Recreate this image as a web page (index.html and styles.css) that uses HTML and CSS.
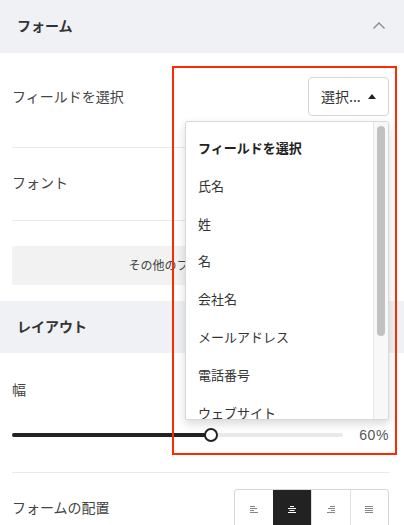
FILE: index.html
```html
<!DOCTYPE html>
<html lang="ja">
<head>
<meta charset="utf-8">
<link rel="stylesheet" href="styles.css">
</head>
<body>
<div class="panel">
  <div class="sec-head">
    <span>フォーム</span>
    <svg class="chev" width="14" height="10" viewBox="0 0 14 10"><polyline points="1.5,7.5 7,2 12.5,7.5" fill="none" stroke="#8a8a8a" stroke-width="1.3"/></svg>
  </div>
  <div class="sec-body">
    <div class="row row-field">
      <span class="label">フィールドを選択</span>
      <div class="select"><span>選択...</span><span class="tri"></span></div>
    </div>
    <div class="row row-font">
      <span class="label">フォント</span>
    </div>
    <div class="more">その他のフィールドを追加</div>
  </div>
  <div class="sec-head layout">
    <span>レイアウト</span>
  </div>
  <div class="sec-body">
    <div class="width-block">
      <div class="label">幅</div>
      <div class="slider-row">
        <div class="track"><div class="fill" style="width:60%"></div><div class="thumb" style="left:60%"></div></div>
        <span class="value">60%</span>
      </div>
    </div>
    <div class="row align-row">
      <span class="label">フォームの配置</span>
      <div class="btn-group">
        <div class="abtn">
          <svg width="10" height="9" viewBox="0 0 10 9"><g stroke="currentColor" stroke-width="1"><line x1="1" y1="1.5" x2="6" y2="1.5"/><line x1="1" y1="3.5" x2="8" y2="3.5"/><line x1="1" y1="5.5" x2="5" y2="5.5"/><line x1="1" y1="7.5" x2="9" y2="7.5"/></g></svg>
        </div>
        <div class="abtn active">
          <svg width="10" height="9" viewBox="0 0 10 9"><g stroke="currentColor" stroke-width="1"><line x1="3" y1="1.5" x2="7" y2="1.5"/><line x1="1" y1="3.5" x2="9" y2="3.5"/><line x1="2.5" y1="5.5" x2="7.5" y2="5.5"/><line x1="1" y1="7.5" x2="9" y2="7.5"/></g></svg>
        </div>
        <div class="abtn">
          <svg width="10" height="9" viewBox="0 0 10 9"><g stroke="currentColor" stroke-width="1"><line x1="4" y1="1.5" x2="9" y2="1.5"/><line x1="2" y1="3.5" x2="9" y2="3.5"/><line x1="5" y1="5.5" x2="9" y2="5.5"/><line x1="1" y1="7.5" x2="9" y2="7.5"/></g></svg>
        </div>
        <div class="abtn">
          <svg width="10" height="9" viewBox="0 0 10 9"><g stroke="currentColor" stroke-width="1"><line x1="1" y1="1.5" x2="9" y2="1.5"/><line x1="1" y1="3.5" x2="9" y2="3.5"/><line x1="1" y1="5.5" x2="9" y2="5.5"/><line x1="1" y1="7.5" x2="9" y2="7.5"/></g></svg>
        </div>
      </div>
    </div>
  </div>

  <div class="dropdown">
    <ul class="options">
      <li class="opt head">フィールドを選択</li>
      <li class="opt">氏名</li>
      <li class="opt">姓</li>
      <li class="opt">名</li>
      <li class="opt">会社名</li>
      <li class="opt">メールアドレス</li>
      <li class="opt">電話番号</li>
      <li class="opt">ウェブサイト</li>
    </ul>
    <div class="sbar"><div class="sthumb"></div></div>
  </div>
  <div class="annot"></div>
</div>
</body>
</html>
```

FILE: styles.css
```css
* { box-sizing: border-box; }
html, body { margin: 0; padding: 0; background: #fff; }
body {
  font-family: "Noto Sans CJK JP", "Noto Sans", sans-serif;
  color: #444;
  font-size: 14px;
  width: 404px;
  height: 525px;
  overflow: hidden;
}
.panel { position: relative; width: 404px; height: 525px; overflow: hidden; }

.sec-head {
  height: 53px;
  background: #f0f1f4;
  display: flex;
  align-items: center;
  justify-content: space-between;
  padding: 0 18px 3px 17px;
  font-weight: bold;
  font-size: 14px;
  color: #333;
}
.sec-head.layout { height: 52px; }
.chev { display: block; margin-top: 2px; }

.sec-body { padding: 0 15px 0 12px; }

.row {
  display: flex;
  align-items: center;
  justify-content: space-between;
  border-bottom: 1px solid #e9e9e9;
}
.label { font-size: 14px; color: #444; line-height: 20px; }
.row-field { height: 95px; padding-bottom: 7px; }
.row-field .label { margin-bottom: 2px; }
.row-font { height: 73px; padding-bottom: 4px; }

.select {
  width: 81px;
  height: 39px;
  border: 1px solid #d6d6d6;
  border-radius: 4px;
  display: flex;
  align-items: center;
  justify-content: space-between;
  padding: 0 12px 2px 12px;
  font-size: 14px;
  color: #333;
}
.tri {
  width: 0; height: 0;
  border-left: 4px solid transparent;
  border-right: 4px solid transparent;
  border-bottom: 5px solid #222;
  margin-top: 1px;
}

.more {
  margin-top: 25px;
  height: 39px;
  background: #f2f2f2;
  border-radius: 2px;
  display: flex;
  align-items: center;
  justify-content: center;
  font-size: 12px;
  color: #444;
  margin-bottom: 16px;
  padding-bottom: 2px;
}

.width-block {
  padding-top: 26px;
  padding-bottom: 27px;
  border-bottom: 1px solid #e9e9e9;
}
.slider-row {
  margin-top: 26px;
  height: 20px;
  display: flex;
  align-items: center;
}
.track {
  position: relative;
  width: 331px;
  height: 4px;
  background: #e9e9e9;
  border-radius: 2px;
}
.fill {
  height: 4px;
  background: #222;
  border-radius: 2px;
}
.thumb {
  position: absolute;
  top: 50%;
  width: 14px;
  height: 14px;
  margin: -7px 0 0 -7px;
  border: 2px solid #222;
  border-radius: 50%;
  background: #fff;
}
.value {
  margin-left: auto;
  font-family: "Liberation Sans", Arial, sans-serif;
  font-size: 14px;
  letter-spacing: 0.6px;
  color: #555;
}

.align-row { border-bottom: none; height: 53px; align-items: flex-start; }
.align-row .label { margin-top: 24px; }
.btn-group {
  margin-top: 16px;
  display: flex;
  flex: none;
  width: 155px;
  height: 40px;
  border: 1px solid #d6d6d6;
  border-radius: 3px;
  overflow: hidden;
}
.abtn {
  flex: 1;
  display: flex;
  align-items: center;
  justify-content: center;
  color: #888;
  border-left: 1px solid #e0e0e0;
}
.abtn:first-child { border-left: none; }
.abtn.active { background: #222; color: #fff; border-left-color: #222; }
.abtn svg { display: block; }

.dropdown {
  position: absolute;
  left: 185px;
  top: 121px;
  width: 204px;
  height: 299px;
  background: #fff;
  border: 1px solid #d9d9d9;
  border-radius: 2px;
  box-shadow: 0 4px 10px rgba(0,0,0,0.15);
  overflow: hidden;
  display: flex;
}
.options {
  list-style: none;
  margin: 0;
  padding: 7px 0 0 12px;
  flex: 1;
}
.opt {
  height: 37.8px;
  line-height: 37.8px;
  font-size: 13px;
  color: #333;
  white-space: nowrap;
}
.opt.head { font-weight: bold; color: #222; }
.sbar {
  width: 15px;
  background: #f8f8f8;
  border-left: 1px solid #e6e6e6;
  padding: 4px 0 0 3px;
}
.sthumb {
  width: 8px;
  height: 210px;
  background: #c1c1c1;
  border-radius: 4px;
}

.annot {
  position: absolute;
  left: 172px;
  top: 66px;
  width: 225px;
  height: 389px;
  border: 2px solid #ff2a00;
  pointer-events: none;
}
```
